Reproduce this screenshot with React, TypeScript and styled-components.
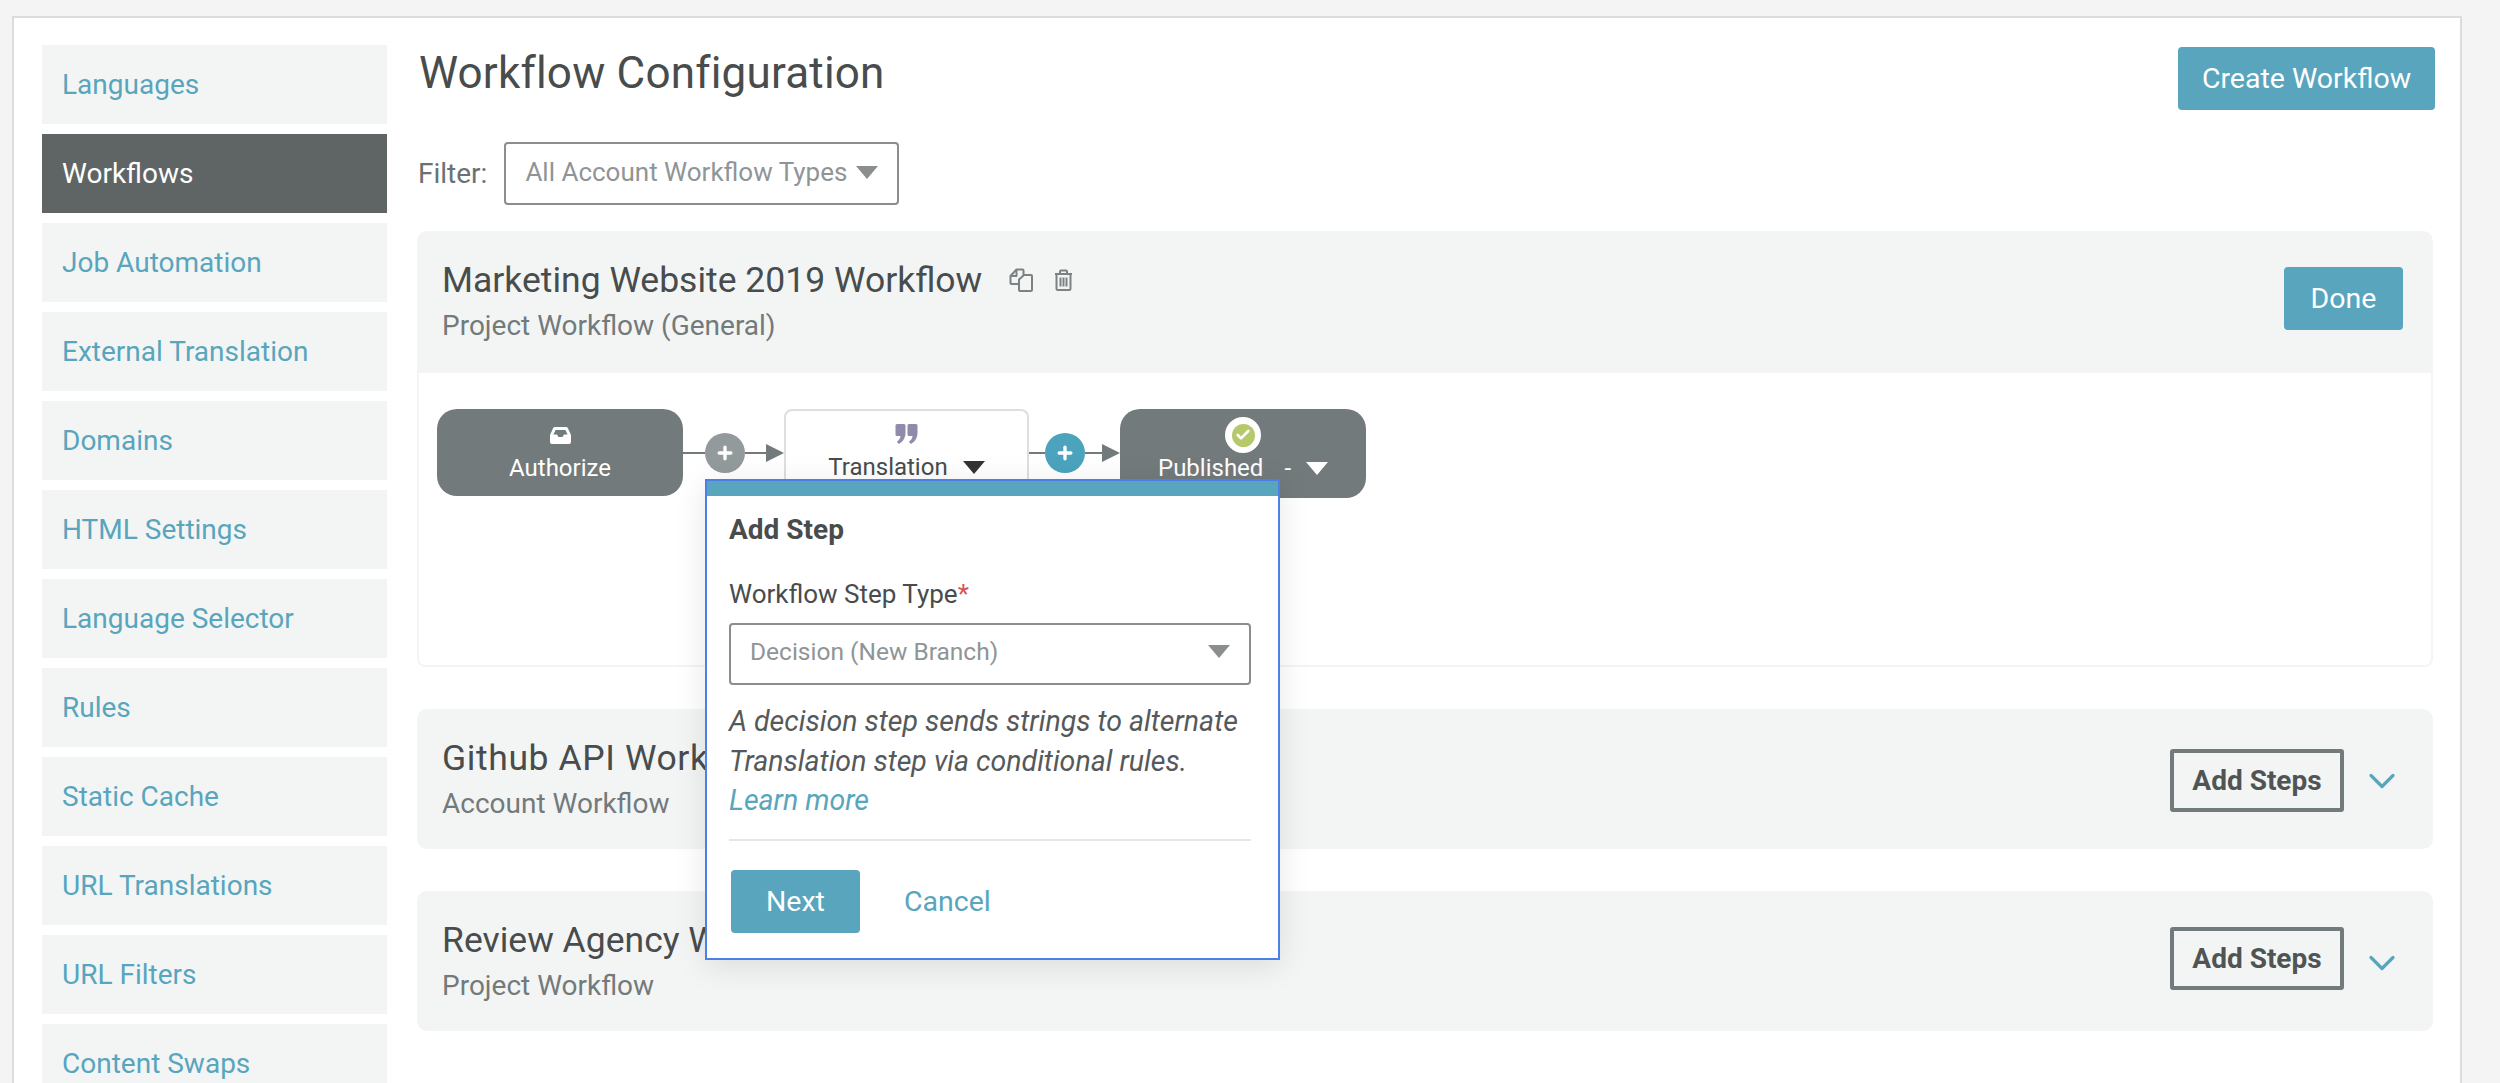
import React from "react";
import styled, { createGlobalStyle } from "styled-components";
import { ChevronDown, Check, Plus } from "lucide-react";

const teal = "#58a5bd";
const slate = "#737a7b";
const ink = "#484c4c";
const wash = "#f3f5f5";

const GlobalStyle = createGlobalStyle`
  html, body {
    margin: 0;
    height: 1083px;
    overflow: hidden;
    background: #f4f4f4;
    font-family: Roboto, "Liberation Sans", sans-serif;
    color: ${ink};
  }
  * { box-sizing: border-box; }
`;

const Panel = styled.div`
  display: flex;
  gap: 30px;
  height: 1067px;
  margin: 16px 38px 0 12px;
  padding: 27px 27px 0 28px;
  overflow: hidden;
  background: #fff;
  border: 2px solid #dcdcdc;
  border-bottom: 0;
`;

const Sidebar = styled.nav`
  display: flex;
  flex-direction: column;
  gap: 10px;
  width: 345px;
  flex: none;
`;

const SideItem = styled.a<{ $active?: boolean }>`
  display: flex;
  align-items: center;
  flex: none;
  height: 79px;
  padding-left: 20px;
  font-size: 28px;
  background: ${(p) => (p.$active ? "#5f6565" : wash)};
  color: ${(p) => (p.$active ? "#fff" : teal)};
`;

const Main = styled.main`
  width: 2016px;
  flex: none;
`;

const TopRow = styled.div`
  display: flex;
  justify-content: space-between;
  align-items: flex-start;
  height: 97px;
`;

const PageTitle = styled.h1`
  margin: 0 0 0 2px;
  font-size: 44px;
  line-height: 56px;
  letter-spacing: 0.2px;
  font-weight: 400;
`;

const TealButton = styled.button<{ $width: number; $pull?: boolean }>`
  flex: none;
  height: 63px;
  padding: 0;
  width: ${(p) => p.$width}px;
  margin: ${(p) => (p.$pull ? "2px -2px 0 0" : "0")};
  font: inherit;
  font-size: 28.5px;
  color: #fff;
  background: ${teal};
  border: 0;
  border-radius: 4px;
`;

const FilterRow = styled.div`
  display: flex;
  align-items: center;
  gap: 17px;
  margin: 0 0 26px 1px;
  font-size: 28px;
  color: #6b7172;
`;

const SelectBox = styled.div<{ $width: number; $small?: boolean }>`
  display: flex;
  align-items: center;
  justify-content: space-between;
  width: ${(p) => p.$width}px;
  height: ${(p) => (p.$small ? "62px" : "63px")};
  padding: 0 19px ${(p) => (p.$small ? "5px" : "3px")} 19px;
  font-size: ${(p) => (p.$small ? "24.5px" : "26px")};
  color: #8f9596;
  background: #fff;
  border: 2px solid #8a8e8e;
  border-radius: 4px;
`;

const Caret = styled.span<{ $color: string; $gap?: number }>`
  display: inline-block;
  flex: none;
  width: 0;
  height: 0;
  margin-left: ${(p) => p.$gap ?? 0}px;
  border-left: 11.5px solid transparent;
  border-right: 11.5px solid transparent;
  border-top: 13px solid ${(p) => p.$color};
`;

const Card = styled.section`
  position: relative;
  margin-bottom: 42px;
  border-radius: 10px;
  background: ${wash};
`;

const CardHead = styled.header<{ $open?: boolean }>`
  display: flex;
  align-items: flex-start;
  justify-content: space-between;
  height: ${(p) => (p.$open ? "142px" : "140px")};
  padding: 29px 30px 0 25px;
`;

const CardTitle = styled.h2<{ $spread?: boolean }>`
  display: flex;
  align-items: center;
  margin: 0;
  font-size: 35.5px;
  line-height: 40px;
  letter-spacing: ${(p) => (p.$spread ? "0.6px" : "0")};
  font-weight: 400;
`;

const CardSub = styled.div`
  margin-top: 6px;
  font-size: 28px;
  line-height: 40px;
  color: ${slate};
`;

const TitleIcons = styled.span`
  display: inline-flex;
  align-items: center;
  gap: 21px;
  margin-left: 27px;
`;

const HeadActions = styled.div<{ $open?: boolean }>`
  display: flex;
  align-items: center;
  gap: 16px;
  height: 63px;
  margin: ${(p) => (p.$open ? "7px 0 0" : "11px -1px 0 0")};
`;

const OutlineButton = styled.button<{ $raised?: boolean }>`
  width: 174px;
  height: 63px;
  margin-bottom: ${(p) => (p.$raised ? "8px" : "0")};
  padding: 0;
  font: inherit;
  font-size: 28px;
  font-weight: 700;
  color: #4f5455;
  background: transparent;
  border: 4px solid ${slate};
  border-radius: 3px;
`;

const Toggle = styled(ChevronDown)`
  color: ${teal};
`;

const CardBody = styled.div`
  display: flex;
  align-items: flex-start;
  height: 294px;
  padding: 36px 18px 0;
  background: #fff;
  border: 2px solid ${wash};
  border-top: 0;
  border-radius: 0 0 8px 8px;
`;

const StepNode = styled.div<{ $light?: boolean; $tall?: boolean }>`
  display: flex;
  flex-direction: column;
  align-items: center;
  flex: none;
  width: ${(p) => (p.$light ? "245px" : "246px")};
  height: ${(p) => (p.$tall ? "89px" : "87px")};
  padding-top: ${(p) => (p.$light ? "5px" : "8px")};
  color: ${(p) => (p.$light ? ink : "#fff")};
  background: ${(p) => (p.$light ? "#fff" : slate)};
  border: ${(p) => (p.$light ? "2px solid #dedede" : "0")};
  border-radius: ${(p) => (p.$light ? "8px" : "20px")};
`;

const IconSlot = styled.div`
  display: flex;
  align-items: center;
  justify-content: center;
  height: 36px;
`;

const StepLabel = styled.div`
  display: flex;
  align-items: center;
  height: 30px;
  font-size: 24px;
`;

const Dash = styled.span`
  margin: 0 15px 0 21px;
`;

const Connector = styled.div<{ $lead: number; $tail: number }>`
  display: flex;
  align-items: center;
  flex: none;
  height: 87px;
  &::before {
    content: "";
    width: ${(p) => p.$lead}px;
    height: 2px;
    background: ${slate};
  }
  &::after {
    content: "";
    width: 0;
    height: 0;
    margin-left: ${(p) => p.$tail}px;
    border-top: 9px solid transparent;
    border-bottom: 9px solid transparent;
    border-left: 18px solid ${slate};
  }
`;

const AddDot = styled.span<{ $on?: boolean }>`
  position: relative;
  display: flex;
  align-items: center;
  justify-content: center;
  flex: none;
  width: 40px;
  height: 40px;
  color: #fff;
  border-radius: 50%;
  background: ${(p) => (p.$on ? "#4ba3be" : "#929a9b")};
  &::after {
    content: "";
    position: absolute;
    left: 40px;
    width: ${(p) => (p.$on ? "17px" : "21px")};
    height: 2px;
    background: ${slate};
  }
`;

const Badge = styled.span`
  display: flex;
  align-items: center;
  justify-content: center;
  width: 36px;
  height: 36px;
  border-radius: 50%;
  background: #fff;
`;

const BadgeInner = styled.span`
  display: flex;
  align-items: center;
  justify-content: center;
  width: 23px;
  height: 23px;
  color: #fff;
  border-radius: 50%;
  background: #b5c96a;
`;

const Popover = styled.div`
  position: absolute;
  left: 288px;
  top: 248px;
  z-index: 2;
  width: 575px;
  height: 481px;
  background: #fff;
  border: 2px solid #4d7fe8;
  box-shadow: 0 6px 30px rgba(0, 0, 0, 0.1);
`;

const PopBar = styled.div`
  height: 15px;
  background: ${teal};
`;

const PopBody = styled.div`
  padding: 14px 27px 0 22px;
`;

const PopTitle = styled.div`
  font-size: 28px;
  line-height: 40px;
  font-weight: 700;
`;

const FieldLabel = styled.label`
  display: block;
  margin: 24px 0 9px;
  font-size: 26px;
  line-height: 40px;
  & > b {
    font-weight: 400;
    color: #d9534f;
  }
`;

const Description = styled.p`
  margin: 17px 0 0;
  font-size: 28.5px;
  line-height: 39.5px;
  font-style: italic;
  color: #55595a;
  & > a {
    display: block;
    color: ${teal};
  }
`;

const Divider = styled.hr`
  margin: 18px 0 29px;
  height: 2px;
  border: 0;
  background: #e5e6e6;
`;

const PopActions = styled.div`
  display: flex;
  align-items: center;
  gap: 44px;
  margin-left: 2px;
`;

const CancelLink = styled.a`
  font-size: 28.5px;
  color: ${teal};
`;

const CopyIcon = () => (
  <svg width="24" height="24" viewBox="0 0 24 24" fill="none" stroke="#7c8283" strokeWidth="2" strokeLinejoin="round">
    <path d="M9 16H2.5a1 1 0 0 1-1-1V8l6-6.5h6a1 1 0 0 1 1 1V7" />
    <path d="M7.5 1.5V8h-6" />
    <path d="M10 11.5 15 7h7a1 1 0 0 1 1 1v14a1 1 0 0 1-1 1H11a1 1 0 0 1-1-1z" />
  </svg>
);

const TrashIcon = () => (
  <svg width="19" height="22" viewBox="0 0 19 22" fill="none" stroke="#7c8283" strokeWidth="2" strokeLinejoin="round">
    <path d="M1 5h17" />
    <path d="M6 5V2.5a1 1 0 0 1 1-1h5a1 1 0 0 1 1 1V5" />
    <path d="M2.5 5v14.5a1.5 1.5 0 0 0 1.5 1.5h11a1.5 1.5 0 0 0 1.5-1.5V5" />
    <path d="M6.5 8.5v9M9.5 8.5v9M12.5 8.5v9" />
  </svg>
);

const InboxIcon = () => (
  <svg width="21" height="17" viewBox="0 0 21 17" fill="#fff">
    <path fillRule="evenodd" d="M5 0h11c.8 0 1.4.4 1.8 1.1L21 8v7a2 2 0 0 1-2 2H2a2 2 0 0 1-2-2V8l3.2-6.9C3.6.4 4.2 0 5 0zm.6 3L3.4 7.5H7l1.5 2.5h4L14 7.5h3.600L15.4 3z" />
  </svg>
);

const QuoteIcon = () => (
  <svg width="23" height="20" viewBox="0 0 23 20" fill="#8f8bab">
    <path d="M2 0h7a1.5 1.5 0 0 1 1.5 1.5V9c0 5-3 9.5-7 11L2 17.500c2-1 3.300-3 3.500-5.500H2A1.500 1.500 0 0 1 .5 10.500v-9A1.500 1.500 0 0 1 2 0z" />
    <path d="M14 0h7a1.500 1.500 0 0 1 1.500 1.500V9c0 5-3 9.500-7 11L14 17.500c2-1 3.300-3 3.500-5.500H14a1.500 1.500 0 0 1-1.500-1.500v-9A1.500 1.500 0 0 1 14 0z" />
  </svg>
);

const navItems = [
  "Languages",
  "Workflows",
  "Job Automation",
  "External Translation",
  "Domains",
  "HTML Settings",
  "Language Selector",
  "Rules",
  "Static Cache",
  "URL Translations",
  "URL Filters",
  "Content Swaps",
];

const collapsed = [
  { title: "Github API Workflow", sub: "Account Workflow", raised: false, spread: true },
  { title: "Review Agency Workflow", sub: "Project Workflow", raised: true, spread: false },
];

export default function App() {
  return (
    <>
      <GlobalStyle />
      <Panel>
        <Sidebar>
          {navItems.map((item) => (
            <SideItem key={item} $active={item === "Workflows"}>
              {item}
            </SideItem>
          ))}
        </Sidebar>
        <Main>
          <TopRow>
            <PageTitle>Workflow Configuration</PageTitle>
            <TealButton $width={257} $pull>
              Create Workflow
            </TealButton>
          </TopRow>
          <FilterRow>
            Filter:
            <SelectBox $width={395}>
              All Account Workflow Types
              <Caret $color="#8a8e8e" />
            </SelectBox>
          </FilterRow>

          <Card>
            <CardHead $open>
              <div>
                <CardTitle>
                  Marketing Website 2019 Workflow
                  <TitleIcons>
                    <CopyIcon />
                    <TrashIcon />
                  </TitleIcons>
                </CardTitle>
                <CardSub>Project Workflow (General)</CardSub>
              </div>
              <HeadActions $open>
                <TealButton $width={119}>Done</TealButton>
              </HeadActions>
            </CardHead>
            <CardBody>
              <StepNode>
                <IconSlot>
                  <InboxIcon />
                </IconSlot>
                <StepLabel>Authorize</StepLabel>
              </StepNode>
              <Connector $lead={22} $tail={21}>
                <AddDot>
                  <Plus size={20} strokeWidth={4} />
                </AddDot>
              </Connector>
              <StepNode $light>
                <IconSlot>
                  <QuoteIcon />
                </IconSlot>
                <StepLabel>
                  Translation
                  <Caret $color="#333" $gap={15} />
                </StepLabel>
              </StepNode>
              <Connector $lead={16} $tail={17}>
                <AddDot $on>
                  <Plus size={20} strokeWidth={4} />
                </AddDot>
              </Connector>
              <StepNode $tall>
                <IconSlot>
                  <Badge>
                    <BadgeInner>
                      <Check size={16} strokeWidth={4} />
                    </BadgeInner>
                  </Badge>
                </IconSlot>
                <StepLabel>
                  Published
                  <Dash>-</Dash>
                  <Caret $color="#fff" />
                </StepLabel>
              </StepNode>
            </CardBody>
            <Popover>
              <PopBar />
              <PopBody>
                <PopTitle>Add Step</PopTitle>
                <FieldLabel>
                  Workflow Step Type<b>*</b>
                </FieldLabel>
                <SelectBox $width={522} $small>
                  Decision (New Branch)
                  <Caret $color="#8a8e8e" />
                </SelectBox>
                <Description>
                  A decision step sends strings to alternate Translation step via conditional rules.
                  <a>Learn more</a>
                </Description>
                <Divider />
                <PopActions>
                  <TealButton $width={129}>Next</TealButton>
                  <CancelLink>Cancel</CancelLink>
                </PopActions>
              </PopBody>
            </Popover>
          </Card>

          {collapsed.map((c) => (
            <Card key={c.title}>
              <CardHead>
                <div>
                  <CardTitle $spread={c.spread}>{c.title}</CardTitle>
                  <CardSub>{c.sub}</CardSub>
                </div>
                <HeadActions>
                  <OutlineButton $raised={c.raised}>Add Steps</OutlineButton>
                  <Toggle size={44} strokeWidth={1.75} />
                </HeadActions>
              </CardHead>
            </Card>
          ))}
        </Main>
      </Panel>
    </>
  );
}
